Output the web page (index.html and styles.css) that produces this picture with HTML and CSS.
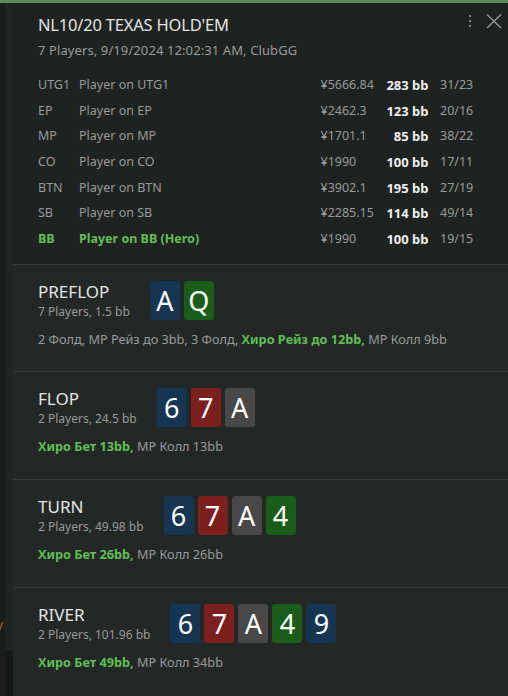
FILE: index.html
```html
<!DOCTYPE html>
<html lang="ru">
<head>
<meta charset="utf-8">
<title>Hand</title>
<link rel="stylesheet" href="styles.css">
</head>
<body>
<div class="topbar"></div>
<div class="app">
  <div class="rail">
    <div class="rail-a"></div>
    <div class="rail-b">
      <div class="rail-fill"></div>
      <div class="rail-mark">/</div>
      <div class="rail-dark"></div>
    </div>
  </div>
  <div class="panel">
    <header class="header">
      <div class="header-top">
        <h1 class="title">NL10/20 TEXAS HOLD'EM</h1>
        <div class="tools">
          <svg class="kebab" width="6" height="16" viewBox="0 0 6 16"><circle cx="3" cy="3" r="1.1" fill="#9a9a9a"/><circle cx="3" cy="8" r="1.1" fill="#9a9a9a"/><circle cx="3" cy="13" r="1.1" fill="#9a9a9a"/></svg>
          <svg class="close" width="16" height="15" viewBox="0 0 16 15"><path d="M1 0.5 L15 14 M15 0.5 L1 14" stroke="#9a9a9a" stroke-width="1.3" fill="none"/></svg>
        </div>
      </div>
      <div class="subtitle">7 Players, 9/19/2024 12:02:31 AM, ClubGG</div>
      <div class="players">
        <div class="prow"><span>UTG1</span><span>Player on UTG1</span><span>¥5666.84</span><span class="bb">283 bb</span><span class="st">31/23</span></div>
        <div class="prow"><span>EP</span><span>Player on EP</span><span>¥2462.3</span><span class="bb">123 bb</span><span class="st">20/16</span></div>
        <div class="prow"><span>MP</span><span>Player on MP</span><span>¥1701.1</span><span class="bb">85 bb</span><span class="st">38/22</span></div>
        <div class="prow"><span>CO</span><span>Player on CO</span><span>¥1990</span><span class="bb">100 bb</span><span class="st">17/11</span></div>
        <div class="prow"><span>BTN</span><span>Player on BTN</span><span>¥3902.1</span><span class="bb">195 bb</span><span class="st">27/19</span></div>
        <div class="prow"><span>SB</span><span>Player on SB</span><span>¥2285.15</span><span class="bb">114 bb</span><span class="st">49/14</span></div>
        <div class="prow hero"><span>BB</span><span>Player on BB (Hero)</span><span class="plain">¥1990</span><span class="bb">100 bb</span><span class="st">19/15</span></div>
      </div>
    </header>

    <section class="street first">
      <div class="street-head">
        <div class="street-info">
          <div class="street-name">PREFLOP</div>
          <div class="street-sub">7 Players, 1.5 bb</div>
        </div>
        <div class="cards"><span class="card blue">A</span><span class="card green">Q</span></div>
      </div>
      <div class="actions">2 Фолд, MP Рейз до 3bb, 3 Фолд, <b class="hero-act">Хиро Рейз до 12bb,</b> MP Колл 9bb</div>
    </section>

    <section class="street">
      <div class="street-head">
        <div class="street-info">
          <div class="street-name">FLOP</div>
          <div class="street-sub">2 Players, 24.5 bb</div>
        </div>
        <div class="cards"><span class="card blue">6</span><span class="card red">7</span><span class="card grey">A</span></div>
      </div>
      <div class="actions"><b class="hero-act">Хиро Бет 13bb,</b> MP Колл 13bb</div>
    </section>

    <section class="street">
      <div class="street-head">
        <div class="street-info">
          <div class="street-name">TURN</div>
          <div class="street-sub">2 Players, 49.98 bb</div>
        </div>
        <div class="cards"><span class="card blue">6</span><span class="card red">7</span><span class="card grey">A</span><span class="card green">4</span></div>
      </div>
      <div class="actions"><b class="hero-act">Хиро Бет 26bb,</b> MP Колл 26bb</div>
    </section>

    <section class="street">
      <div class="street-head">
        <div class="street-info">
          <div class="street-name">RIVER</div>
          <div class="street-sub">2 Players, 101.96 bb</div>
        </div>
        <div class="cards"><span class="card blue">6</span><span class="card red">7</span><span class="card grey">A</span><span class="card green">4</span><span class="card blue">9</span></div>
      </div>
      <div class="actions"><b class="hero-act">Хиро Бет 49bb,</b> MP Колл 34bb</div>
    </section>
  </div>
</div>
</body>
</html>
```

FILE: styles.css
```css
* { box-sizing: border-box; margin: 0; padding: 0; }

html, body {
  width: 508px;
  height: 696px;
  overflow: hidden;
  background: #232827;
}

body {
  font-family: "Noto Sans", "Open Sans", sans-serif;
  color: #9a9a9a;
  font-size: 13px;
}

.topbar {
  height: 3px;
  background: #5b8c5a;
}

.app {
  display: flex;
  height: 693px;
}

.rail {
  display: flex;
  width: 13px;
  flex: none;
}

.rail-a {
  width: 5px;
  background: #191c1b;
}

.rail-b {
  width: 8px;
  display: flex;
  flex-direction: column;
  background: #202423;
}

.rail-fill { flex: 1; }

.rail-mark {
  height: 26px;
  margin-left: -6px;
  margin-bottom: 12px;
  color: #b08040;
  font-size: 11px;
  line-height: 26px;
  overflow: hidden;
}

.rail-dark {
  height: 45px;
  background: #151817;
}

.panel {
  flex: 1;
  display: flex;
  flex-direction: column;
  background: #232827;
}

.header {
  background: #1e2220;
  padding: 10px 0 12px 25px;
}

.header-top {
  display: flex;
  align-items: center;
  justify-content: space-between;
}

.title {
  font-size: 16.5px;
  font-weight: 400;
  color: #e4e4e4;
  line-height: 24px;
  letter-spacing: -0.2px;
}

.tools {
  display: flex;
  align-items: center;
  gap: 13px;
  padding-right: 6px;
  margin-top: -8px;
}

.subtitle {
  margin-top: 4px;
  line-height: 18px;
  letter-spacing: 0.1px;
}

.players {
  margin-top: 13px;
  font-size: 12.5px;
}

.prow {
  display: grid;
  grid-template-columns: 41px 241.5px 60px 48px 1fr;
  height: 25.7px;
  align-items: center;
  line-height: 18px;
}

.prow .bb {
  text-align: right;
  font-weight: 700;
  font-size: 13px;
  color: #f0f0f0;
}

.prow .st { padding-left: 11.5px; }

.prow.hero span { color: #60bf55; font-weight: 700; }
.prow.hero span.plain,
.prow.hero span.st { color: #9a9a9a; font-weight: 400; }
.prow.hero span.bb { color: #f0f0f0; font-weight: 700; }

.street {
  border-top: 1px solid #3a3f3d;
  padding: 16px 0 24px 25px;
}

.street.first { padding-bottom: 23px; }

.street-head {
  display: flex;
  align-items: center;
  gap: 20px;
}

.street-name {
  font-size: 17px;
  line-height: 22px;
  color: #e4e4e4;
}

.street-sub {
  font-size: 12px;
  line-height: 18px;
}

.cards {
  display: flex;
  gap: 4px;
}

.card {
  width: 30px;
  height: 39px;
  border-radius: 3px;
  color: #ffffff;
  font-size: 27px;
  line-height: 39px;
  text-align: center;
}

.card.blue { background: #163553; }
.card.red { background: #7b1f1f; }
.card.grey { background: #484848; }
.card.green { background: #1a5c19; }

.actions {
  margin-top: 9px;
  line-height: 18px;
  font-size: 12.7px;
}

.hero-act {
  color: #60bf55;
  font-weight: 700;
}
```
